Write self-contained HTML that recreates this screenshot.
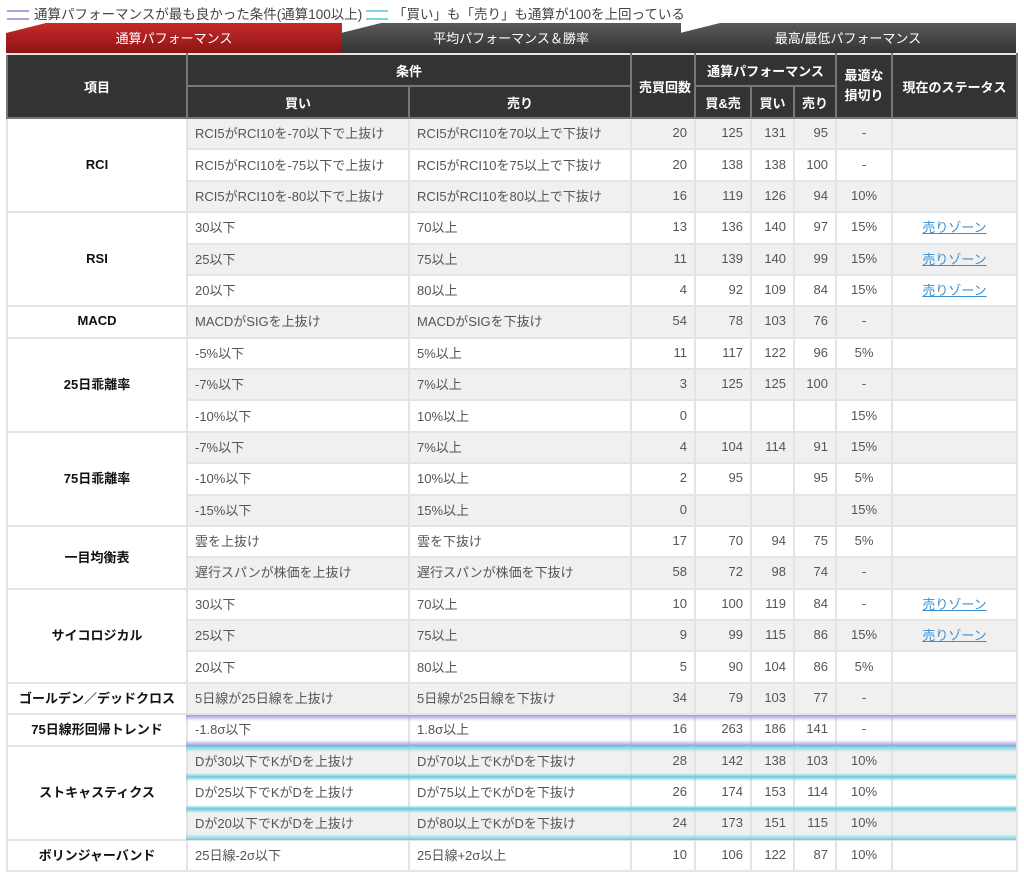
<!DOCTYPE html>
<html><head><meta charset="utf-8"><style>
*{margin:0;padding:0;box-sizing:border-box}
body{width:1024px;height:876px;background:#fff;font-family:"Liberation Sans","Noto Sans CJK JP",sans-serif;color:#555;font-size:13px;position:relative;overflow:hidden}
.legend{position:absolute;left:7px;top:3px;font-size:13.5px;color:#444;white-space:nowrap}
.ic{display:inline-block;width:22px;height:10px;border-top:2px solid;border-bottom:2px solid;vertical-align:middle;margin-right:5px}
.tab{position:absolute;top:23px;height:30px;color:#fff;font-size:13px;text-align:center;line-height:32px;clip-path:polygon(0 10px,40px 0,100% 0,100% 100%,0 100%)}
.red{background:linear-gradient(#c62a2a,#8e1414)}
.gray{background:linear-gradient(#5a5a5a,#333)}
table{position:absolute;left:6px;top:53px;width:1010px;border-collapse:collapse;table-layout:fixed}
td,th{border:2px solid #e4e4e4;padding:0 7px;white-space:nowrap;overflow:hidden}
th{background:#333;color:#fff;font-weight:bold;font-size:13px;height:32px;border-color:#777;text-align:center}
tr:first-child th{border-top-color:#e4e4e4}
td{height:31.38px;padding-top:0;padding-bottom:2px}
tr.g td{background:#f0f0f0}
td.k{background:#fff!important;text-align:center;font-weight:bold;color:#111}
td.n{text-align:right}
td.s{text-align:center}
a{color:#3a8fd0;text-decoration:underline}
.band{position:absolute;left:186px;width:830px;height:8px}
.p{background:linear-gradient(rgba(160,150,225,0),#a095e0 50%,rgba(160,150,225,0))}
.c{background:linear-gradient(rgba(110,205,222,0),#6ccde0 50%,rgba(110,205,222,0))}
</style></head><body>
<div class="legend"><span class="ic" style="border-color:#a9a0e0"></span>通算パフォーマンスが最も良かった条件(通算100以上) <span class="ic" style="border-color:#7fd3e3"></span>「買い」も「売り」も通算が100を上回っている</div>
<div class="tab red" style="left:6px;width:336px">通算パフォーマンス</div>
<div class="tab gray" style="left:341px;width:340px">平均パフォーマンス＆勝率</div>
<div class="tab gray" style="left:680px;width:336px">最高/最低パフォーマンス</div>
<table>
<colgroup><col style="width:180px"><col style="width:222px"><col style="width:222px"><col style="width:64px"><col style="width:56px"><col style="width:43px"><col style="width:42px"><col style="width:56px"><col style="width:125px"></colgroup>
<tr><th rowspan="2">項目</th><th colspan="2">条件</th><th rowspan="2">売買回数</th><th colspan="3">通算パフォーマンス</th><th rowspan="2" style="line-height:20px">最適な<br>損切り</th><th rowspan="2">現在のステータス</th></tr>
<tr><th>買い</th><th>売り</th><th>買&amp;売</th><th>買い</th><th>売り</th></tr>
<tr class="g"><td class="k" rowspan="3">RCI</td><td>RCI5がRCI10を-70以下で上抜け</td><td>RCI5がRCI10を70以上で下抜け</td><td class="n">20</td><td class="n">125</td><td class="n">131</td><td class="n">95</td><td class="s">-</td><td></td></tr>
<tr><td>RCI5がRCI10を-75以下で上抜け</td><td>RCI5がRCI10を75以上で下抜け</td><td class="n">20</td><td class="n">138</td><td class="n">138</td><td class="n">100</td><td class="s">-</td><td></td></tr>
<tr class="g"><td>RCI5がRCI10を-80以下で上抜け</td><td>RCI5がRCI10を80以上で下抜け</td><td class="n">16</td><td class="n">119</td><td class="n">126</td><td class="n">94</td><td class="s">10%</td><td></td></tr>
<tr><td class="k" rowspan="3">RSI</td><td>30以下</td><td>70以上</td><td class="n">13</td><td class="n">136</td><td class="n">140</td><td class="n">97</td><td class="s">15%</td><td class="s"><a>売りゾーン</a></td></tr>
<tr class="g"><td>25以下</td><td>75以上</td><td class="n">11</td><td class="n">139</td><td class="n">140</td><td class="n">99</td><td class="s">15%</td><td class="s"><a>売りゾーン</a></td></tr>
<tr><td>20以下</td><td>80以上</td><td class="n">4</td><td class="n">92</td><td class="n">109</td><td class="n">84</td><td class="s">15%</td><td class="s"><a>売りゾーン</a></td></tr>
<tr class="g"><td class="k">MACD</td><td>MACDがSIGを上抜け</td><td>MACDがSIGを下抜け</td><td class="n">54</td><td class="n">78</td><td class="n">103</td><td class="n">76</td><td class="s">-</td><td></td></tr>
<tr><td class="k" rowspan="3">25日乖離率</td><td>-5%以下</td><td>5%以上</td><td class="n">11</td><td class="n">117</td><td class="n">122</td><td class="n">96</td><td class="s">5%</td><td></td></tr>
<tr class="g"><td>-7%以下</td><td>7%以上</td><td class="n">3</td><td class="n">125</td><td class="n">125</td><td class="n">100</td><td class="s">-</td><td></td></tr>
<tr><td>-10%以下</td><td>10%以上</td><td class="n">0</td><td></td><td></td><td></td><td class="s">15%</td><td></td></tr>
<tr class="g"><td class="k" rowspan="3">75日乖離率</td><td>-7%以下</td><td>7%以上</td><td class="n">4</td><td class="n">104</td><td class="n">114</td><td class="n">91</td><td class="s">15%</td><td></td></tr>
<tr><td>-10%以下</td><td>10%以上</td><td class="n">2</td><td class="n">95</td><td></td><td class="n">95</td><td class="s">5%</td><td></td></tr>
<tr class="g"><td>-15%以下</td><td>15%以上</td><td class="n">0</td><td></td><td></td><td></td><td class="s">15%</td><td></td></tr>
<tr><td class="k" rowspan="2">一目均衡表</td><td>雲を上抜け</td><td>雲を下抜け</td><td class="n">17</td><td class="n">70</td><td class="n">94</td><td class="n">75</td><td class="s">5%</td><td></td></tr>
<tr class="g"><td>遅行スパンが株価を上抜け</td><td>遅行スパンが株価を下抜け</td><td class="n">58</td><td class="n">72</td><td class="n">98</td><td class="n">74</td><td class="s">-</td><td></td></tr>
<tr><td class="k" rowspan="3">サイコロジカル</td><td>30以下</td><td>70以上</td><td class="n">10</td><td class="n">100</td><td class="n">119</td><td class="n">84</td><td class="s">-</td><td class="s"><a>売りゾーン</a></td></tr>
<tr class="g"><td>25以下</td><td>75以上</td><td class="n">9</td><td class="n">99</td><td class="n">115</td><td class="n">86</td><td class="s">15%</td><td class="s"><a>売りゾーン</a></td></tr>
<tr><td>20以下</td><td>80以上</td><td class="n">5</td><td class="n">90</td><td class="n">104</td><td class="n">86</td><td class="s">5%</td><td></td></tr>
<tr class="g"><td class="k">ゴールデン／デッドクロス</td><td>5日線が25日線を上抜け</td><td>5日線が25日線を下抜け</td><td class="n">34</td><td class="n">79</td><td class="n">103</td><td class="n">77</td><td class="s">-</td><td></td></tr>
<tr><td class="k">75日線形回帰トレンド</td><td>-1.8σ以下</td><td>1.8σ以上</td><td class="n">16</td><td class="n">263</td><td class="n">186</td><td class="n">141</td><td class="s">-</td><td></td></tr>
<tr class="g"><td class="k" rowspan="3">ストキャスティクス</td><td>Dが30以下でKがDを上抜け</td><td>Dが70以上でKがDを下抜け</td><td class="n">28</td><td class="n">142</td><td class="n">138</td><td class="n">103</td><td class="s">10%</td><td></td></tr>
<tr><td>Dが25以下でKがDを上抜け</td><td>Dが75以上でKがDを下抜け</td><td class="n">26</td><td class="n">174</td><td class="n">153</td><td class="n">114</td><td class="s">10%</td><td></td></tr>
<tr class="g"><td>Dが20以下でKがDを上抜け</td><td>Dが80以上でKがDを下抜け</td><td class="n">24</td><td class="n">173</td><td class="n">151</td><td class="n">115</td><td class="s">10%</td><td></td></tr>
<tr><td class="k">ボリンジャーバンド</td><td>25日線-2σ以下</td><td>25日線+2σ以上</td><td class="n">10</td><td class="n">106</td><td class="n">122</td><td class="n">87</td><td class="s">10%</td><td></td></tr>
</table>
<div class="band" style="top:715px;height:6px;background:linear-gradient(#a095e0,rgba(160,150,225,0))"></div>
<div class="band" style="top:740px;height:6px;background:linear-gradient(rgba(160,150,225,0),#a095e0)"></div>
<div class="band" style="top:746px;height:6px;background:linear-gradient(#6ccde0,rgba(110,205,222,0))"></div>
<div class="band c" style="top:773px"></div>
<div class="band c" style="top:805px"></div>
<div class="band" style="top:834px;height:6px;background:linear-gradient(rgba(110,205,222,0),#6ccde0)"></div>
</body></html>
